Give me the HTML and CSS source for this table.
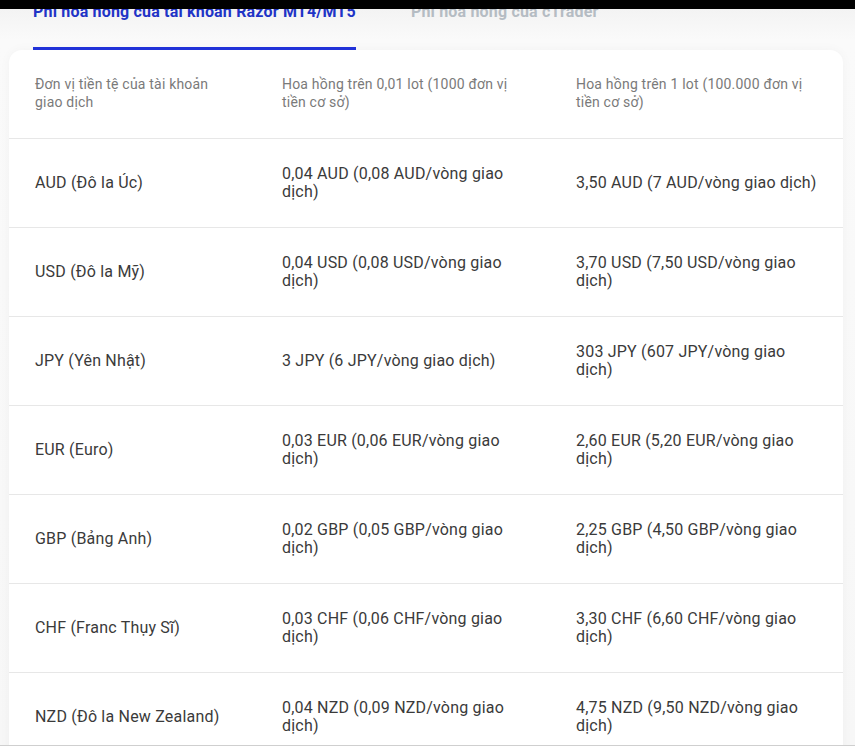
FILE: index.html
```
<!DOCTYPE html>
<html lang="vi">
<head>
<meta charset="utf-8">
<link rel="stylesheet" href="styles.css">
</head>
<body>
<div class="topbar"></div>
<div class="page">
  <div class="tabs">
    <div class="tab active">Phí hoa hồng của tài khoản Razor MT4/MT5</div>
    <div class="tab">Phí hoa hồng của cTrader</div>
  </div>
  <div class="card">
    <div class="row head">
      <div class="cell">Đơn vị tiền tệ của tài khoản giao dịch</div>
      <div class="cell">Hoa hồng trên 0,01 lot (1000 đơn vị tiền cơ sở)</div>
      <div class="cell">Hoa hồng trên 1 lot (100.000 đơn vị tiền cơ sở)</div>
    </div>
    <div class="row">
      <div class="cell">AUD (Đô la Úc)</div>
      <div class="cell">0,04 AUD (0,08 AUD/vòng giao dịch)</div>
      <div class="cell">3,50 AUD (7 AUD/vòng giao dịch)</div>
    </div>
    <div class="row">
      <div class="cell">USD (Đô la Mỹ)</div>
      <div class="cell">0,04 USD (0,08 USD/vòng giao dịch)</div>
      <div class="cell">3,70 USD (7,50 USD/vòng giao dịch)</div>
    </div>
    <div class="row">
      <div class="cell">JPY (Yên Nhật)</div>
      <div class="cell">3 JPY (6 JPY/vòng giao dịch)</div>
      <div class="cell">303 JPY (607 JPY/vòng giao dịch)</div>
    </div>
    <div class="row">
      <div class="cell">EUR (Euro)</div>
      <div class="cell">0,03 EUR (0,06 EUR/vòng giao dịch)</div>
      <div class="cell">2,60 EUR (5,20 EUR/vòng giao dịch)</div>
    </div>
    <div class="row">
      <div class="cell">GBP (Bảng Anh)</div>
      <div class="cell">0,02 GBP (0,05 GBP/vòng giao dịch)</div>
      <div class="cell">2,25 GBP (4,50 GBP/vòng giao dịch)</div>
    </div>
    <div class="row">
      <div class="cell">CHF (Franc Thụy Sĩ)</div>
      <div class="cell">0,03 CHF (0,06 CHF/vòng giao dịch)</div>
      <div class="cell">3,30 CHF (6,60 CHF/vòng giao dịch)</div>
    </div>
    <div class="row">
      <div class="cell">NZD (Đô la New Zealand)</div>
      <div class="cell">0,04 NZD (0,09 NZD/vòng giao dịch)</div>
      <div class="cell">4,75 NZD (9,50 NZD/vòng giao dịch)</div>
    </div>
  </div>
</div>
</body>
</html>
```
FILE: styles.css
```
html, body {
  margin: 0;
  padding: 0;
  background: #ffffff;
  font-family: Roboto, "Noto Sans", sans-serif;
}

.topbar {
  position: fixed;
  top: 0;
  left: 0;
  right: 0;
  height: 9px;
  background: #000000;
  z-index: 10;
}

.page {
  height: 745px;
  overflow: hidden;
  background: linear-gradient(#f1f1f1 0, #fafafa 40px, #f7f7f7 100%);
  border-bottom: 1px solid #cfcfcf;
}

.tabs {
  display: flex;
  gap: 55px;
  padding-left: 33px;
  padding-top: 1px;
}

.tab {
  font-size: 16px;
  font-weight: 700;
  line-height: 22px;
  letter-spacing: 0.18px;
  color: #b5bcc3;
  padding-bottom: 24px;
  border-bottom: 3px solid transparent;
}

.tab.active {
  color: #1f34c6;
  border-bottom-color: #2132d8;
}

.card {
  margin: 0 12px 0 9px;
  background: #ffffff;
  border-radius: 13px 13px 0 0;
  box-shadow: 0 0 12px rgba(0, 0, 0, 0.035);
}

.row {
  display: grid;
  grid-template-columns: 247px 294px 1fr;
  align-items: center;
  height: 88px;
  border-bottom: 1px solid #e7e7e7;
  font-size: 16px;
  line-height: 18px;
  letter-spacing: 0.2px;
  color: #3a3a3a;
}

.row.head {
  align-items: start;
  padding-top: 25px;
  height: 63px;
  font-size: 14px;
  line-height: 18px;
  color: #7a7a7a;
}

.cell {
  padding: 0 18px 0 26px;
}

.cell:first-child {
  padding-right: 30px;
}

.cell:last-child {
  padding-right: 24px;
}
```
